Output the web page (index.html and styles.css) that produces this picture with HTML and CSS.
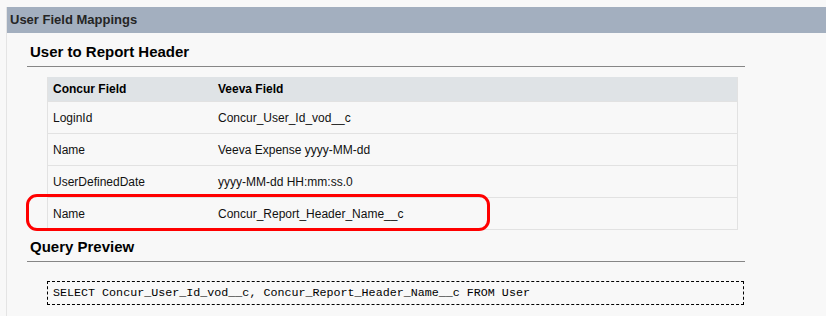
FILE: index.html
```html
<!DOCTYPE html>
<html>
<head>
    <title>User Field Mappings</title>
    <link rel="stylesheet" href="styles.css">
</head>
<body>
    <div class="panel">
        <div class="panel-header">User Field Mappings</div>

        <div class="section">
            <h3 class="section-title">User to Report Header</h3>
            <div class="mapping-wrap">
                <table class="mapping-table">
                    <thead>
                        <tr>
                            <th class="col-concur">Concur Field</th>
                            <th>Veeva Field</th>
                        </tr>
                    </thead>
                    <tbody>
                        <tr>
                            <td>LoginId</td>
                            <td>Concur_User_Id_vod__c</td>
                        </tr>
                        <tr>
                            <td>Name</td>
                            <td>Veeva Expense yyyy-MM-dd</td>
                        </tr>
                        <tr>
                            <td>UserDefinedDate</td>
                            <td>yyyy-MM-dd HH:mm:ss.0</td>
                        </tr>
                        <tr>
                            <td>Name</td>
                            <td>Concur_Report_Header_Name__c</td>
                        </tr>
                    </tbody>
                </table>
                <!-- highlight around the newly added row -->
                <div class="row-highlight"></div>
            </div>

            <h3 class="section-title query-title">Query Preview</h3>
            <div class="query-box">SELECT Concur_User_Id_vod__c, Concur_Report_Header_Name__c FROM User</div>
        </div>
    </div>
</body>
</html>
```

FILE: styles.css
```css
/* General Styles */
body {
    margin: 0;
    padding: 0;
    background: #f8f8f8;
    font-family: Arial, "Liberation Sans", sans-serif;
    font-size: 12px;
    color: #111;
}

/* Panel */
.panel {
    margin: 7px 0 0 6px;
    border-left: 1px solid #e4e4e4;
    min-height: 320px;
}

.panel-header {
    background: #a3afbf;
    height: 26px;
    line-height: 26px;
    padding-left: 3px;
    font-weight: bold;
    font-size: 13px;
    color: #252525;
}

/* Sections */
.section {
    margin-left: 20px;
    width: 718px;
}

.section-title {
    margin: 10px 0 0 0;
    padding: 0 0 5px 3px;
    font-size: 15px;
    line-height: 18px;
    color: #000;
    border-bottom: 1px solid #868686;
}

.query-title {
    margin-top: 8px;
}

/* Mapping Table */
.mapping-wrap {
    position: relative;
    margin: 10px 0 0 20px;
    width: 691px;
}

.mapping-table {
    width: 100%;
    border-collapse: collapse;
    border: 1px solid #e2e2e2;
    border-top: none;
}

.mapping-table th {
    background: #dfe3e6;
    height: 24px;
    padding: 0 5px;
    text-align: left;
    font-weight: bold;
    color: #000;
}

.mapping-table .col-concur {
    width: 155px;
}

.mapping-table td {
    height: 31px;
    padding: 0 5px;
    border-top: 1px solid #e2e2e2;
    color: #111;
}

.row-highlight {
    position: absolute;
    left: -21px;
    top: 117px;
    width: 458px;
    height: 31px;
    border: 3px solid #f00;
    border-radius: 11px;
}

/* Query Preview */
.query-box {
    margin: 19px 0 0 20px;
    width: 690px;
    height: 22px;
    line-height: 22px;
    padding-left: 5px;
    border: 1px dashed #000;
    font-family: "Courier New", "Liberation Mono", monospace;
    font-size: 11.7px;
    color: #000;
    white-space: nowrap;
}
```
